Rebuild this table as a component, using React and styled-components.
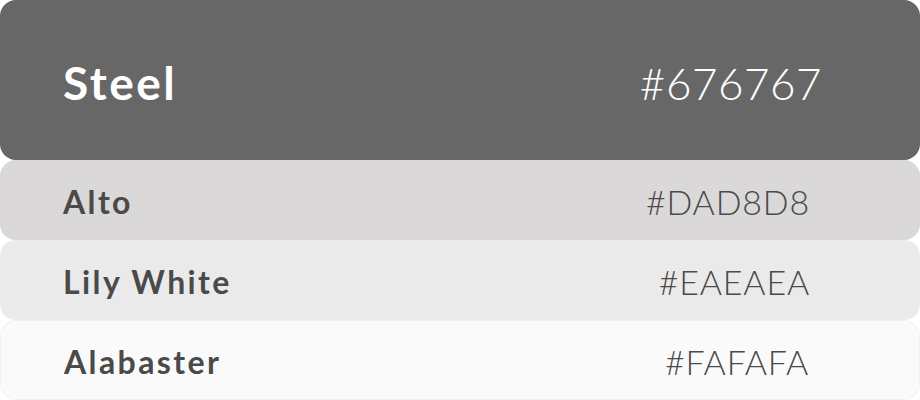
import React from 'react'
import styled, { createGlobalStyle } from 'styled-components'

const GlobalStyle = createGlobalStyle`
  html, body {
    margin: 0;
    padding: 0;
    background: #ffffff;
    font-family: Lato, "Open Sans", sans-serif;
  }
  body {
    width: 920px;
    height: 400px;
    overflow: hidden;
  }
`

const swatches = [
  { name: 'Steel', hex: '#676767', bg: '#676767', big: true },
  { name: 'Alto', hex: '#DAD8D8', bg: '#DAD8D8' },
  { name: 'Lily White', hex: '#EAEAEA', bg: '#EAEAEA' },
  { name: 'Alabaster', hex: '#FAFAFA', bg: '#FAFAFA', outline: true },
]

export default function App() {
  return (
    <>
      <GlobalStyle />
      <Palette>
        {swatches.map((s) => (
          <Swatch key={s.name} $bg={s.bg} $big={s.big} $outline={s.outline}>
            <Name $big={s.big}>{s.name}</Name>
            <Hex $big={s.big}>{s.hex}</Hex>
          </Swatch>
        ))}
      </Palette>
    </>
  )
}

const Palette = styled.div`
  display: flex;
  flex-direction: column;
  width: 920px;
`

const Swatch = styled.div`
  display: flex;
  align-items: center;
  justify-content: space-between;
  box-sizing: border-box;
  height: ${(p) => (p.$big ? '160px' : '80px')};
  padding: ${(p) => (p.$big ? '6px 98px 0 63px' : '4px 110px 0 63px')};
  background: ${(p) => p.$bg};
  border-radius: 16px;
  border: ${(p) => (p.$outline ? '1px solid #f1f1f1' : 'none')};
  color: ${(p) => (p.$big ? '#ffffff' : '#4a4a4a')};
`

const Name = styled.span`
  font-weight: 700;
  font-size: ${(p) => (p.$big ? '46px' : '32px')};
  letter-spacing: ${(p) => (p.$big ? '2.5px' : '2.4px')};
  line-height: 1;
`

const Hex = styled.span`
  font-weight: 300;
  font-size: ${(p) => (p.$big ? '44px' : '34px')};
  letter-spacing: ${(p) => (p.$big ? '0.5px' : '0.8px')};
  line-height: 1;
`
